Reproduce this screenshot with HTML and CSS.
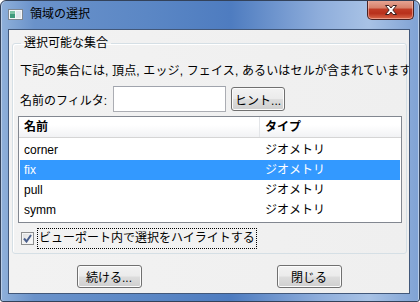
FILE: index.html
```html
<html>
<head>
    <title>領域の選択</title>
    <link rel="stylesheet" href="styles.css">
</head>
<body>
    <div class="window">
        <div class="titleBar">
            <svg class="appIcon" width="15" height="11" viewBox="0 0 15 11">
                <rect x="0.5" y="0.5" width="14" height="10" fill="#f4f6f8" stroke="#7d8690"/>
                <rect x="2" y="2" width="5" height="7" fill="#3f9a7c"/>
                <rect x="2" y="2" width="5" height="3" fill="#7ec3a6"/>
                <rect x="8" y="2" width="5" height="7" fill="#dfe6ec"/>
            </svg>
            <div class="titleText">領域の選択</div>
            <div class="closeBtn">
                <svg width="16" height="12" viewBox="0 0 16 12">
                    <path d="M2.5 1.5 H6 L8 4 L10 1.5 H13.5 L9.8 6 L13.5 10.5 H10 L8 8 L6 10.5 H2.5 L6.2 6 Z" fill="#fff" stroke="#3b2020" stroke-width="1"/>
                </svg>
            </div>
        </div>

        <div class="client">
            <fieldset class="groupBox">
                <legend>選択可能な集合</legend>
                <div class="desc">下記の集合には, 頂点, エッジ, フェイス, あるいはセルが含まれています</div>

                <div class="filterRow">
                    <span>名前のフィルタ:</span>
                    <div class="filterInput"></div>
                    <div class="btn hintBtn">ヒント...</div>
                </div>

                <div class="setTable">
                    <div class="tableHead">
                        <div class="headCell first">名前</div>
                        <div class="headCell">タイプ</div>
                    </div>
                    <div class="tableBody">
                        <div class="row"><span>corner</span><span>ジオメトリ</span></div>
                        <div class="row selected"><span>fix</span><span>ジオメトリ</span></div>
                        <div class="row"><span>pull</span><span>ジオメトリ</span></div>
                        <div class="row"><span>symm</span><span>ジオメトリ</span></div>
                    </div>
                </div>

                <div class="checkRow">
                    <div class="checkBox">
                        <svg width="9" height="9" viewBox="0 0 9 9">
                            <path d="M1 4.5 L3.5 7.5 L8 1" fill="none" stroke="#4a5f8c" stroke-width="2"/>
                        </svg>
                    </div>
                    <div class="checkLabel">ビューポート内で選択をハイライトする</div>
                </div>
            </fieldset>

            <div class="bottomButtons">
                <div class="btn dlgBtn">続ける...</div>
                <div class="btn dlgBtn">閉じる</div>
            </div>
        </div>
    </div>
</body>
</html>
```

FILE: styles.css
```css
body {
    margin: 0;
    background-color: #ffffff;
    font-family: "Liberation Sans", "Noto Sans CJK JP", sans-serif;
    font-size: 12px;
    color: #000000;
}

.window {
    width: 420px;
    height: 302px;
    box-sizing: border-box;
    border: 1px solid #33425a;
    border-radius: 6px 6px 3px 3px;
    padding: 0 9px 7px 7px;
    display: flex;
    flex-direction: column;
    overflow: hidden;
    background: linear-gradient(to right, #8fb0da 0%, #6a92ca 8%, #5b87c5 35%, #4e7cc0 55%, #8eaddb 76%, #a8c2e5 88%, #7fa2d4 100%);
    box-shadow: inset 1px 0 0 #b9cde8, inset -1px 0 0 #b9cde8;
}

.titleBar {
    height: 28px;
    margin: 0 -9px 0 -7px;
    padding-left: 7px;
    display: flex;
    align-items: flex-start;
}

.appIcon {
    margin-top: 8px;
}

.titleText {
    margin-left: 7px;
    margin-top: 5px;
    font-size: 12px;
    line-height: 16px;
    color: #000000;
}

.closeBtn {
    margin-left: auto;
    margin-right: 5px;
    margin-top: -1px;
    width: 45px;
    height: 19px;
    border: 1px solid #4a2222;
    border-top: none;
    border-radius: 0 0 5px 5px;
    display: flex;
    align-items: center;
    justify-content: center;
    background: linear-gradient(to bottom, #e8a898 0%, #d8826c 40%, #c03b25 50%, #b8301c 70%, #d9684a 100%);
    box-shadow: inset 0 0 0 1px rgba(255, 210, 200, 0.5);
}

.client {
    flex: 1;
    border: 1px solid #42587a;
    background: linear-gradient(to right, #f2f2f2, #efefef);
    overflow: hidden;
    display: flex;
    flex-direction: column;
}

.groupBox {
    margin: 5px 2px 0 3px;
    padding: 12px 0 4px 7px;
    border: 1px solid #d5dfe5;
    border-radius: 3px;
    box-shadow: inset 1px 1px 0 #ffffff;
    min-width: 0;
}

.groupBox legend {
    padding: 0 3px;
    margin-left: 1px;
    line-height: 16px;
}

.desc {
    line-height: 16px;
    white-space: nowrap;
    letter-spacing: 0.15px;
    width: 0;
    overflow: visible;
}

.filterRow {
    margin-top: 7px;
    display: flex;
    align-items: center;
    height: 26px;
}

.filterInput {
    margin-left: 6px;
    width: 111px;
    height: 24px;
    background-color: #ffffff;
    border: 1px solid #abadb3;
    border-top-color: #a0a4ad;
}

.btn {
    box-sizing: border-box;
    border: 1px solid #707070;
    border-radius: 3px;
    display: flex;
    align-items: center;
    justify-content: center;
    background: linear-gradient(to bottom, #f2f2f2 0%, #ebebeb 48%, #dddddd 52%, #cfcfcf 100%);
    box-shadow: inset 0 0 0 1px #fcfcfc;
}

.hintBtn {
    margin-left: 5px;
    width: 54px;
    height: 24px;
}

.setTable {
    margin: 4px 0 0 -2px;
    width: 384px;
    height: 107px;
    box-sizing: border-box;
    border: 1px solid #828790;
    background-color: #ffffff;
}

.tableHead {
    display: flex;
    height: 20px;
    border-bottom: 1px solid #d5d5d5;
    background: linear-gradient(to bottom, #ffffff 0%, #ffffff 40%, #f1f2f4 100%);
    font-weight: bold;
}

.headCell {
    padding-left: 5px;
    line-height: 20px;
}

.headCell.first {
    width: 235px;
    border-right: 1px solid #e3e5e8;
}

.tableBody {
    padding: 2px 1px 0 1px;
}

.row {
    display: grid;
    grid-template-columns: 241px 1fr;
    padding-left: 4px;
    height: 20px;
    line-height: 20px;
}

.row.selected {
    background-color: #3399ff;
    color: #ffffff;
}

.checkRow {
    margin-top: 5px;
    display: flex;
    align-items: center;
}

.checkBox {
    margin-left: 1px;
    width: 11px;
    height: 11px;
    border: 1px solid #8e8f8f;
    background: linear-gradient(to bottom right, #dcdcdc, #ffffff);
    box-shadow: inset 0 0 0 1px #f4f4f4;
    display: flex;
    align-items: center;
    justify-content: center;
}

.checkLabel {
    margin-left: 3px;
    padding: 0 1px;
    height: 19px;
    line-height: 19px;
    border: 1px dotted #000000;
}

.bottomButtons {
    margin-top: 11px;
    display: flex;
    justify-content: center;
    gap: 135px;
}

.dlgBtn {
    width: 65px;
    height: 23px;
}
```
